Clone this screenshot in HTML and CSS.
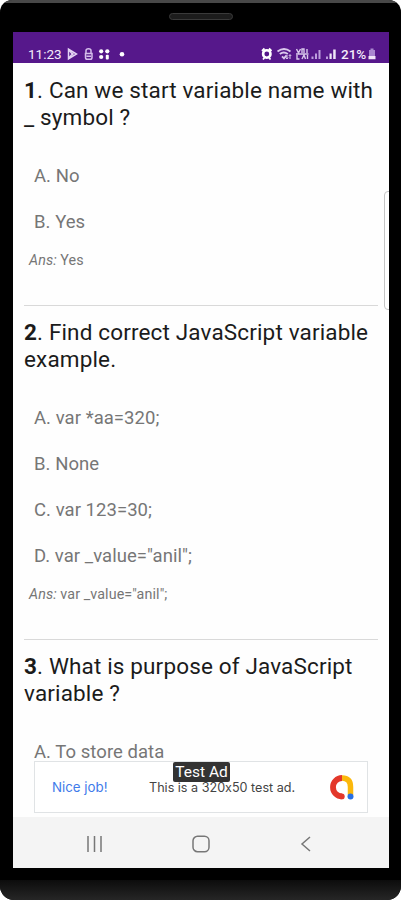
FILE: index.html
```html
<!DOCTYPE html>
<html lang="en">
<head>
    <meta charset="UTF-8">
    <meta name="viewport" content="width=device-width, initial-scale=1.0">
    <title>JavaScript Questions</title>
    <link rel="stylesheet" href="styles.css">
</head>
<body>

    <div class="phone">
        <div class="phone-top"><div class="speaker"></div></div>

        <div class="screen">
            <div class="status-bar">
                <span class="time">11:23</span>
                <svg class="notifications" width="70" height="14" viewBox="0 0 70 14">
                    <path d="M2.500 2v10l8-5zM2.500 2.500l5 6M2.500 11.500l5-6" fill="none" stroke="#e3d3f3" stroke-width="1.500"/>
                    <path d="M20 6.500V3.500q0-1.800 2.500-1.800t2.500 1.800V6.500M19.500 6.500h6.500v4q0 1.800-1.800 1.800h-2.900q-1.800 0-1.800-1.800zM20.500 9.300h4.500" fill="none" stroke="#d5bfeb" stroke-width="1.500"/>
                    <g fill="#fff">
                        <circle cx="35.200" cy="4.300" r="2.100"/>
                        <circle cx="41.300" cy="4.300" r="2.100"/>
                        <circle cx="35.200" cy="10" r="2.100"/>
                        <rect x="39.800" y="7.800" width="3" height="4.600" rx="1"/>
                        <circle cx="56" cy="7.300" r="2.300"/>
                    </g>
                </svg>
                <svg class="signals" width="78" height="14" viewBox="0 0 78 14">
                    <path d="M1 4l2.500-2.500M10.500 4L8 1.500" stroke="#fff" stroke-width="1.800"/>
                    <circle cx="5.800" cy="7" r="3.700" fill="none" stroke="#fff" stroke-width="2.600"/>
                    <path d="M2 12.500l2-2.500M9.500 12.500l-2-2.500" stroke="#fff" stroke-width="1.800"/>
                    <g fill="none" stroke="#d9c8ec" stroke-width="1.900">
                        <path d="M16.500 4.500q6.500-5 13 0M18.800 7q4-3 8 0M21 9.300l2 2 2.500-3"/>
                        <path d="M26 8v4M24.800 10.500l1.200 1.500 1.200-1.500M29 12V8M27.800 9L29 7.500 30.200 9" stroke-width="1"/>
                    </g>
                    <g fill="none" stroke="#d9c8ec" stroke-width="1.400">
                        <path d="M35.500 2l2 4 2-4M41 6V2h2v4M46 2v4M36 8v4h2.500M41 12l2-4 1.500 4M46.500 8v4M35 7h12.500"/>
                    </g>
                    <g fill="#bd9fdd">
                        <path d="M50.500 12V9.500h2V12zM54 12V6.500h2V12zM57.500 12V3h2v9z"/>
                        <path d="M65 12V9.500h2V12z"/>
                    </g>
                    <path d="M68.500 12V6.500h2.200V12zM72.200 12V2.500h2.500V12z" fill="#efe5f8"/>
                </svg>
                <span class="percent">21%</span>
                <svg class="battery" width="8" height="14" viewBox="0 0 8 14">
                    <path d="M2.500 1.500h3V3H7v6H1V3h1.500z" fill="#a987cf"/>
                    <path d="M.500 9h7v3.200h-7z" fill="#f0e6f8"/>
                </svg>
            </div>

            <div class="content">
                <div class="question">
                    <h2 class="title"><b>1</b>. Can we start variable name with<br>_ symbol ?</h2>
                    <div class="option">A. No</div>
                    <div class="option">B. Yes</div>
                    <div class="answer"><i>Ans:</i> Yes</div>
                </div>
                <div class="question">
                    <h2 class="title"><b>2</b>. Find correct JavaScript variable<br>example.</h2>
                    <div class="option">A. var *aa=320;</div>
                    <div class="option">B. None</div>
                    <div class="option">C. var 123=30;</div>
                    <div class="option">D. var _value="anil";</div>
                    <div class="answer"><i>Ans:</i> var _value="anil";</div>
                </div>
                <div class="question">
                    <h2 class="title"><b>3</b>. What is purpose of JavaScript<br>variable ?</h2>
                    <div class="option">A. To store data</div>
                </div>
                <div class="edge-panel"></div>

                <div class="ad">
                    <span class="ad-label">Test Ad</span>
                    <span class="ad-link">Nice job!</span>
                    <span class="ad-text">This is a 320x50 test ad.</span>
                    <svg class="ad-logo" width="28" height="28" viewBox="0 0 28 28">
                        <path d="M14 5q8.500 0 8.500 9v8" fill="none" stroke="#fbb80c" stroke-width="5.500"/>
                        <path d="M14 5a9 9.200 0 1 0 0 18.400" fill="none" stroke="#e3382b" stroke-width="5.800"/>
                        <circle cx="13.800" cy="23.400" r="2.900" fill="#e3382b"/>
                        <circle cx="22.500" cy="23.600" r="3" fill="#2870e4"/>
                    </svg>
                </div>
            </div>

            <div class="nav-bar">
                <svg width="18" height="18" viewBox="0 0 18 18"><path d="M2 1v16M8.500 1v16M15 1v16"/></svg>
                <svg width="18" height="18" viewBox="0 0 18 18"><rect x="1" y="1.300" width="16" height="15.400" rx="4.500"/></svg>
                <svg width="18" height="18" viewBox="0 0 18 18"><path d="M13 2L5 9l8 7"/></svg>
            </div>
        </div>

        <div class="phone-bottom"></div>
    </div>

</body>
</html>
```

FILE: styles.css
```css
* {
    box-sizing: border-box;
}

body {
    margin: 0;
    background-color: #fff;
    font-family: Roboto, "Liberation Sans", sans-serif;
}

.phone {
    width: 401px;
    height: 900px;
    display: flex;
    flex-direction: column;
    background-color: #000;
    border-radius: 12px 12px 14px 14px;
    overflow: hidden;
}

.phone-top {
    height: 32px;
    flex: none;
    border-top: 3px solid #484848;
    display: flex;
    justify-content: center;
}

.speaker {
    width: 64px;
    height: 7px;
    margin-top: 10px;
    border: 1px solid #3a3a3a;
    border-radius: 4px;
    background-color: #1c1c1c;
}

.screen {
    width: 376px;
    height: 836px;
    margin-left: 13px;
    display: flex;
    flex-direction: column;
    background-color: #fefefe;
}

.status-bar {
    height: 31px;
    flex: none;
    display: flex;
    align-items: center;
    padding: 12px 13px 0 15px;
    background-color: #56188b;
    color: #f3ebfa;
    font-size: 13.5px;
    white-space: nowrap;
}

.time {
    width: 34px;
}

.notifications {
    margin-left: 4px;
}

.signals {
    margin-left: auto;
}

.percent {
    width: 27px;
    margin-left: 2px;
    font-weight: 500;
}

.battery {
    flex: none;
}

.content {
    position: relative;
    height: 754px;
    padding: 0 11px;
    overflow: hidden;
}

.question {
    padding-top: 14px;
    color: #767676;
    white-space: nowrap;
}

.question + .question {
    border-top: 1px solid #d9d9d9;
    margin-top: 35px;
    padding-top: 13px;
}

.title {
    margin: 0 0 22px;
    color: #1b1b1b;
    font-size: 22.5px;
    font-weight: 400;
    line-height: 27px;
    letter-spacing: 0.15px;
}

.option {
    height: 46px;
    padding-left: 10px;
    font-size: 18.5px;
    line-height: 46px;
    letter-spacing: 0.05px;
}

.answer {
    margin-top: 5px;
    padding-left: 5px;
    font-size: 14.3px;
    line-height: 20px;
    letter-spacing: 0.1px;
}

.edge-panel {
    position: absolute;
    top: 128px;
    right: -4px;
    width: 9px;
    height: 119px;
    border: 1px solid #c4c4c4;
    border-radius: 4px;
    background-color: #fff;
}

.ad {
    position: absolute;
    left: 21px;
    bottom: 4px;
    width: 334px;
    height: 52px;
    display: flex;
    align-items: center;
    padding: 0 11px 0 17px;
    border: 1px solid #e0e3e5;
    background-color: #fff;
    font-family: Inter, Roboto, sans-serif;
    font-feature-settings: "calt" 0;
    white-space: nowrap;
}

.ad-label {
    position: absolute;
    top: 0;
    left: 138px;
    width: 57px;
    height: 20px;
    border-radius: 2px;
    background-color: #333;
    color: #fff;
    font-family: Roboto, sans-serif;
    font-size: 15.5px;
    line-height: 21px;
    text-align: center;
}

.ad-link {
    width: 97px;
    color: #3f7bea;
    font-size: 13.3px;
}

.ad-text {
    color: #444;
    font-size: 12.6px;
}

.ad-logo {
    margin-left: auto;
}

.nav-bar {
    flex: 1;
    display: flex;
    justify-content: space-between;
    align-items: center;
    padding: 2px 74px 0 73px;
    background-color: #f4f4f4;
}

.nav-bar svg {
    fill: none;
    stroke: #777;
    stroke-width: 1.5;
}

.phone-bottom {
    height: 20px;
    margin-top: auto;
    background: linear-gradient(#0c0c0c, #262626);
}
```
